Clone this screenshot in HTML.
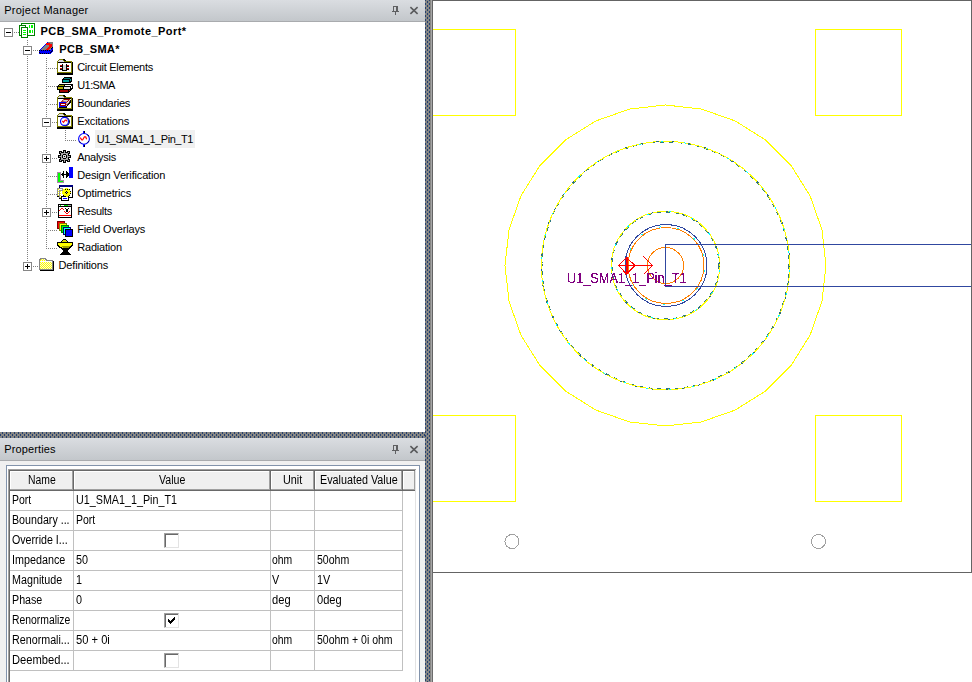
<!DOCTYPE html>
<html lang="en">
<head>
<meta charset="utf-8">
<title>Project Manager</title>
<style>
html,body{margin:0;padding:0;background:#fff;overflow:hidden}
body{width:972px;height:682px;position:relative;font-family:"Liberation Sans",sans-serif;color:#000}
.t{position:absolute;white-space:pre;transform-origin:0 0;display:block}
.abs{position:absolute}
.hdr{position:absolute;left:0;width:425px;background:linear-gradient(#dadde1,#c3c7cb);}
.dotv{position:absolute;width:1px;background-image:linear-gradient(#808080 50%,transparent 50%);background-size:1px 2px}
.doth{position:absolute;height:1px;background-image:linear-gradient(90deg,#808080 50%,transparent 50%);background-size:2px 1px}
.box{position:absolute;width:7px;height:7px;border:1px solid #868686;background:#fff}
.box i{position:absolute;left:1px;top:3px;width:5px;height:1px;background:#000}
.box b{position:absolute;left:3px;top:1px;width:1px;height:5px;background:#000}
.cb{position:absolute;width:13px;height:13px;background:#fff;border-top:1px solid #a0a0a0;border-left:1px solid #a0a0a0;border-right:1px solid #e3e3e3;border-bottom:1px solid #e3e3e3;box-shadow:inset 1px 1px 0 #696969}
.gl{position:absolute;background:#c0c0c0}
.hc{position:absolute;top:471px;height:20px;background:#f0f0f0;box-shadow:inset 0 -1px 0 #696969,inset -1px 0 0 #696969,inset 0 -2px 0 #a0a0a0,inset -2px 0 0 #a0a0a0,inset 1px 1px 0 #fff}
</style>
</head>
<body>

<!-- left: project manager -->
<div class="hdr" style="top:0;height:22px;border-bottom:1px solid #a9abae;box-sizing:border-box"></div>
<div class="abs" style="left:0;top:22px;width:425px;height:410px;background:#fff"></div>
<!-- splitters -->
<svg class="abs" style="left:0;top:0" width="972" height="682" shape-rendering="crispEdges">
<defs>
<pattern id="pv" x="425" y="3" width="4" height="4" patternUnits="userSpaceOnUse"><rect width="4" height="4" fill="#868684"/><rect x="0" y="0" width="1" height="2" fill="#24406f"/><rect x="2" y="2" width="1" height="2" fill="#24406f"/></pattern>
<pattern id="ph" x="0" y="432" width="4" height="4" patternUnits="userSpaceOnUse"><rect width="4" height="4" fill="#868684"/><rect x="2" y="0" width="1" height="2" fill="#24406f"/><rect x="0" y="2" width="1" height="2" fill="#24406f"/></pattern>
</defs>
<rect x="0" y="432" width="425" height="6" fill="url(#ph)"/>
<rect x="425" y="0" width="6" height="682" fill="url(#pv)"/>
<rect x="431" y="0" width="1" height="682" fill="#a6a6a6"/>
</svg>
<!-- properties -->
<div class="hdr" style="top:438px;height:23px;border-bottom:1px solid #a9abae;box-sizing:border-box"></div>
<div class="abs" style="left:0;top:461px;width:425px;height:221px;background:#f0f0f0"></div>
<div class="abs" style="left:6px;top:465px;width:414px;height:230px;border:1px solid #8293ab;background:#fff;box-sizing:border-box"></div>

<!-- tree connector lines -->
<div class="doth" style="left:14px;top:32px;width:5px"></div>
<div class="dotv" style="left:27px;top:40px;height:7px"></div>
<div class="dotv" style="left:27px;top:56px;height:206px"></div>
<div class="doth" style="left:33px;top:50px;width:6px"></div>
<div class="dotv" style="left:46px;top:58px;height:191px"></div>
<div class="doth" style="left:48px;top:68px;width:9px"></div>
<div class="doth" style="left:48px;top:86px;width:9px"></div>
<div class="doth" style="left:48px;top:104px;width:9px"></div>
<div class="doth" style="left:52px;top:122px;width:5px"></div>
<div class="dotv" style="left:65px;top:130px;height:10px"></div>
<div class="doth" style="left:65px;top:140px;width:11px"></div>
<div class="doth" style="left:52px;top:158px;width:5px"></div>
<div class="doth" style="left:48px;top:176px;width:9px"></div>
<div class="doth" style="left:48px;top:194px;width:9px"></div>
<div class="doth" style="left:52px;top:212px;width:5px"></div>
<div class="doth" style="left:48px;top:230px;width:9px"></div>
<div class="doth" style="left:48px;top:248px;width:9px"></div>
<div class="doth" style="left:33px;top:266px;width:6px"></div>
<!-- expand boxes -->
<div class="box" style="left:4px;top:28px"><i></i></div>
<div class="box" style="left:23px;top:46px"><i></i></div>
<div class="box" style="left:42px;top:118px"><i></i></div>
<div class="box" style="left:42px;top:154px"><i></i><b></b></div>
<div class="box" style="left:42px;top:208px"><i></i><b></b></div>
<div class="box" style="left:23px;top:262px"><i></i><b></b></div>
<!-- selection -->
<div class="abs" style="left:95px;top:130px;width:100px;height:18px;background:#f0f0f0"></div>

<!-- icons -->
<svg class="abs" style="left:0;top:0" width="425" height="432" shape-rendering="crispEdges">
<!-- project icon @ (19,23) -->
<g transform="translate(19 23)" fill="#fff" stroke="#008000">
<rect x="2.5" y="0.5" width="13" height="12"/>
<rect x="0.5" y="2.5" width="6" height="10"/>
<rect x="2.5" y="4.5" width="6" height="10"/>
<g fill="#00ff00" stroke="none">
<rect x="4" y="7" width="3" height="1"/><rect x="4" y="9" width="3" height="1"/><rect x="4" y="11" width="3" height="1"/>
<rect x="10" y="2" width="1" height="3"/><rect x="12" y="2" width="2" height="3"/><rect x="10" y="7" width="2" height="3"/><rect x="13" y="7" width="1" height="3"/>
</g>
</g>
<!-- design icon @ (39,42) -->
<g transform="translate(39 42)">
<polygon points="0,8 8,0 13,0 14,1 14,5 11,8" fill="#808080"/>
<g fill="#ff0000"><rect x="7" y="1" width="4" height="1"/><rect x="6" y="2" width="7" height="1"/><rect x="10" y="3" width="3" height="2"/><rect x="9" y="5" width="3" height="1"/><rect x="8" y="6" width="3" height="1"/><rect x="7" y="7" width="3" height="1"/></g>
<rect x="0" y="8" width="11" height="4" fill="#0000ff"/>
<polygon points="11,8 14,5 14,9 11,12" fill="#0000ff"/>
<g fill="#0000ff"><rect x="1" y="7" width="1" height="1"/><rect x="2" y="6" width="1" height="1"/><rect x="3" y="5" width="1" height="1"/><rect x="4" y="4" width="1" height="1"/><rect x="5" y="3" width="1" height="1"/><rect x="6" y="2" width="1" height="1"/><rect x="8" y="0" width="1" height="1"/></g>
<g fill="#000"><rect x="0" y="8" width="1" height="1"/><rect x="2" y="8" width="1" height="1"/><rect x="4" y="8" width="1" height="1"/><rect x="6" y="8" width="1" height="1"/><rect x="8" y="8" width="1" height="1"/><rect x="10" y="8" width="1" height="1"/>
<rect x="0" y="10" width="1" height="1"/><rect x="1" y="11" width="1" height="1"/><rect x="3" y="11" width="1" height="1"/><rect x="5" y="11" width="1" height="1"/><rect x="7" y="11" width="1" height="1"/><rect x="9" y="11" width="1" height="1"/>
<rect x="11" y="10" width="1" height="1"/><rect x="12" y="9" width="1" height="1"/><rect x="13" y="8" width="1" height="1"/><rect x="12" y="6" width="1" height="1"/><rect x="13" y="5" width="1" height="1"/></g>
</g>
<!-- circuit elements @ (57,59) -->
<g transform="translate(57 59)">
<g>
<rect x="0" y="3" width="16" height="13" fill="#000"/>
<rect x="0" y="2" width="15" height="12" fill="#808000"/>
<polygon points="0,2.5 2,0 6,0 8,2.5" fill="#808000"/>
<polygon points="6,0 7,0 9,2 7.5,2" fill="#000"/>
<polygon points="1,3 2.5,1 6,1 7,3" fill="#d8d8e4"/>
<rect x="1" y="3" width="13" height="1" fill="#000"/>
<rect x="1" y="4" width="13" height="9" fill="#fff"/>
</g>
<rect x="5" y="5" width="5" height="7" fill="#000"/><rect x="6" y="6" width="3" height="5" fill="#d4d4d4"/><rect x="6" y="5" width="3" height="1" fill="#fff"/>
<rect x="3" y="6" width="2" height="1" fill="#c00000"/><rect x="3" y="7" width="2" height="1" fill="#000"/>
<rect x="3" y="9" width="2" height="1" fill="#c00000"/><rect x="3" y="10" width="2" height="1" fill="#000"/>
<rect x="10" y="6" width="2" height="1" fill="#c00000"/><rect x="10" y="7" width="2" height="1" fill="#000"/>
<rect x="10" y="9" width="2" height="1" fill="#c00000"/><rect x="10" y="10" width="2" height="1" fill="#000"/>
</g>
<!-- U1:SMA @ (57,77) -->
<g transform="translate(57 77)">
<polygon points="5,2 7,0 15,0 15,4 13,6 5,6" fill="#000"/>
<rect x="7" y="1" width="6" height="1" fill="#008080"/><rect x="6" y="3" width="6" height="2" fill="#00a0a0"/><rect x="13" y="2" width="1" height="2" fill="#00a0a0"/>
<polygon points="0,9 2,7 16,7 16,11 14,13 0,13" fill="#000"/>
<rect x="2" y="8" width="5" height="1" fill="#a0a000"/><rect x="8" y="8" width="6" height="1" fill="#fff"/>
<rect x="1" y="10" width="5" height="2" fill="#b0b000"/><rect x="7" y="10" width="6" height="2" fill="#e8e8e8"/><rect x="14" y="9" width="1" height="2" fill="#fff"/>
<polygon points="2,13 14,13 12,16 2,16" fill="#000"/>
<rect x="3" y="13" width="8" height="2" fill="#a00000"/><rect x="12" y="13" width="1" height="1" fill="#c00000"/>
</g>
<!-- boundaries @ (57,95) -->
<g transform="translate(57 95)">
<g>
<rect x="0" y="3" width="16" height="13" fill="#000"/>
<rect x="0" y="2" width="15" height="12" fill="#808000"/>
<polygon points="0,2.5 2,0 6,0 8,2.5" fill="#808000"/>
<polygon points="6,0 7,0 9,2 7.5,2" fill="#000"/>
<polygon points="1,3 2.5,1 6,1 7,3" fill="#d8d8e4"/>
<rect x="1" y="3" width="13" height="1" fill="#000"/>
<rect x="1" y="4" width="13" height="9" fill="#fff"/>
</g>
<polygon points="9,12 13,5 14,5 14,7 10,12" fill="#000"/>
<rect x="2" y="12" width="8" height="1" fill="#000"/>
<g shape-rendering="auto"><polygon points="9.5,7.5 12.5,4.5 12.5,6.5 9.5,10.5" fill="#e4e4dc" stroke="#a00000" stroke-width="0.8" stroke-dasharray="1 1"/>
<polygon points="4.5,6.8 6.7,4.5 12.5,4.5 9.8,7.2" fill="#d8d8d0" stroke="#a00000" stroke-width="1"/></g>
<rect x="2" y="7" width="7" height="5" fill="#0000ff"/>
<rect x="3.5" y="8.5" width="5" height="2" fill="#fff" stroke="#a00000"/>
</g>
<!-- excitations @ (57,113) -->
<g transform="translate(57 113)">
<g>
<rect x="0" y="3" width="16" height="13" fill="#000"/>
<rect x="0" y="2" width="15" height="12" fill="#808000"/>
<polygon points="0,2.5 2,0 6,0 8,2.5" fill="#808000"/>
<polygon points="6,0 7,0 9,2 7.5,2" fill="#000"/>
<polygon points="1,3 2.5,1 6,1 7,3" fill="#d8d8e4"/>
<rect x="1" y="3" width="13" height="1" fill="#000"/>
<rect x="1" y="4" width="13" height="9" fill="#fff"/>
</g>
<g shape-rendering="auto"><circle cx="8.4" cy="8.6" r="4" fill="none" stroke="#000" stroke-width="1.1"/>
<circle cx="7.5" cy="8.4" r="4" fill="#fff" stroke="#0000ff" stroke-width="1.15"/>
<path d="M5.3 7.8l1.2 1.5 1.7-2.2 1.3.1.3 1.3" stroke="#ff0000" stroke-width="1.1" fill="none"/></g>
</g>
<!-- excitation item @ (76,131) -->
<g transform="translate(76 131)" shape-rendering="auto">
<rect x="7" y="0" width="2" height="3" fill="#0000ff" shape-rendering="crispEdges"/><rect x="7" y="13" width="2" height="3" fill="#0000ff" shape-rendering="crispEdges"/>
<rect x="8" y="0" width="1" height="2" fill="#000" shape-rendering="crispEdges"/><rect x="8" y="14" width="1" height="2" fill="#000" shape-rendering="crispEdges"/>
<circle cx="8" cy="7.9" r="5.4" fill="#fff" stroke="#0000ff" stroke-width="1.1"/>
<path d="M11.6 3.6l1.3 1.6M12.6 10.3l-1 1.3M3.3 10.6l1.2 1.3" stroke="#000" stroke-width="0.9" fill="none"/>
<path d="M4.3 6.6l1.5 2.4h.8l1.8-3.2h1.3l.9 2.4" stroke="#ff0000" stroke-width="1.2" fill="none"/>
</g>
<!-- analysis gear @ (58,150) -->
<g transform="translate(58 150)" fill="#000">
<rect x="5" y="0" width="3" height="13"/><rect x="0" y="5" width="13" height="3"/>
<rect x="1" y="1" width="3" height="3"/><rect x="9" y="1" width="3" height="3"/><rect x="1" y="9" width="3" height="3"/><rect x="9" y="9" width="3" height="3"/>
<rect x="2" y="2" width="9" height="9"/>
<rect x="3" y="3" width="7" height="7" fill="#a8a8a8"/>
<rect x="6" y="1" width="1" height="2" fill="#a8a8a8"/><rect x="6" y="10" width="1" height="2" fill="#a8a8a8"/><rect x="1" y="6" width="2" height="1" fill="#a8a8a8"/><rect x="10" y="6" width="2" height="1" fill="#a8a8a8"/>
<rect x="2" y="2" width="1" height="1" fill="#b0b0b0"/><rect x="10" y="2" width="1" height="1" fill="#b0b0b0"/><rect x="2" y="10" width="1" height="1" fill="#b0b0b0"/><rect x="10" y="10" width="1" height="1" fill="#b0b0b0"/>
<rect x="4" y="4" width="5" height="5"/><rect x="5" y="5" width="3" height="3" fill="#d8d8d8"/><rect x="6" y="6" width="1" height="1"/>
<rect x="4" y="4" width="1" height="1" fill="#a8a8a8"/><rect x="8" y="4" width="1" height="1" fill="#a8a8a8"/><rect x="4" y="8" width="1" height="1" fill="#a8a8a8"/><rect x="8" y="8" width="1" height="1" fill="#a8a8a8"/>
</g>
<!-- design verification @ (57,167) -->
<g transform="translate(57 167)">
<rect x="12" y="0" width="4" height="11" fill="#0000ff"/>
<path d="M0 5h4v8h3v3h-7z" fill="#a888a8"/>
<path d="M1 6h2v8h3v1h-5z" fill="#00ff00"/>
<g fill="#000"><rect x="4" y="7" width="8" height="1"/><rect x="5" y="6" width="1" height="3"/><rect x="6" y="4" width="1" height="7"/><rect x="9" y="4" width="1" height="7"/><rect x="10" y="5" width="1" height="5"/><rect x="11" y="6" width="1" height="3"/></g>
</g>
<!-- optimetrics @ (57,185) -->
<g transform="translate(57 185)">
<rect x="2.5" y="1.5" width="13" height="11" fill="#fff" stroke="#000"/>
<rect x="2" y="0" width="14" height="2" fill="#000080"/>
<rect x="0.5" y="3.5" width="5" height="8" fill="#fff" stroke="#909090"/><rect x="0" y="11" width="3" height="1" fill="#000"/>
<rect x="2.5" y="5.5" width="4" height="8" fill="#fff" stroke="#909090"/><rect x="2" y="13" width="3" height="1" fill="#000"/>
<g fill="#ffff00"><rect x="1" y="4" width="1" height="1"/><rect x="1" y="6" width="1" height="1"/><rect x="1" y="8" width="1" height="1"/><rect x="1" y="10" width="1" height="1"/>
<rect x="3" y="6" width="1" height="1"/><rect x="3" y="8" width="1" height="1"/><rect x="3" y="10" width="1" height="1"/><rect x="3" y="12" width="1" height="1"/></g>
<rect x="4.5" y="11.5" width="7" height="4" fill="#fff" stroke="#000"/><rect x="6" y="13" width="4" height="1" fill="#0000ff"/>
<g fill="#ffff00"><rect x="8" y="3" width="3" height="9"/><rect x="6" y="4" width="7" height="7"/><rect x="5" y="6" width="9" height="3"/></g>
<g fill="#000"><rect x="8" y="4" width="1" height="1"/><rect x="10" y="4" width="1" height="1"/><rect x="12" y="4" width="1" height="1"/><rect x="13" y="6" width="1" height="1"/><rect x="13" y="8" width="1" height="1"/><rect x="12" y="10" width="1" height="1"/><rect x="6" y="10" width="1" height="1"/><rect x="8" y="11" width="1" height="1"/><rect x="11" y="11" width="1" height="1"/>
<rect x="9" y="6" width="1" height="3"/><rect x="8" y="7" width="3" height="1"/></g>
<rect x="9" y="7" width="1" height="1" fill="#b0b0b0"/>
</g>
<!-- results @ (58,204) -->
<g transform="translate(58 204)">
<rect x="0.5" y="0.5" width="13" height="13" fill="#fff" stroke="#000"/>
<rect x="1" y="2" width="12" height="1" fill="#000"/>
<rect x="2" y="1" width="1" height="1" fill="#00e000"/><rect x="6" y="1" width="4" height="1" fill="#00e000"/><rect x="10" y="1" width="3" height="1" fill="#a0a0a0"/>
<rect x="1" y="11" width="12" height="1" fill="#ff0000"/>
<g fill="#ff0000"><rect x="1" y="6" width="1" height="1"/><rect x="2" y="5" width="1" height="1"/><rect x="3" y="4" width="1" height="1"/><rect x="4" y="4" width="1" height="1"/><rect x="5" y="5" width="1" height="1"/><rect x="6" y="7" width="1" height="1"/><rect x="7" y="8" width="1" height="1"/><rect x="8" y="9" width="1" height="1"/><rect x="9" y="9" width="1" height="1"/><rect x="10" y="8" width="1" height="1"/><rect x="11" y="7" width="1" height="1"/></g>
<g fill="#000"><rect x="7" y="4" width="1" height="1"/><rect x="10" y="4" width="1" height="1"/><rect x="8" y="5" width="2" height="3"/></g>
</g>
<!-- field overlays @ (57,221) -->
<g transform="translate(57 221)">
<rect x="0.5" y="0.5" width="7" height="7" fill="#ff0000" stroke="#800000"/>
<rect x="2.5" y="2.5" width="7" height="7" fill="#ffff00" stroke="#808000"/>
<rect x="4.5" y="4.5" width="7" height="7" fill="#00ff00" stroke="#008000"/>
<rect x="6.5" y="6.5" width="7" height="7" fill="#00ffff" stroke="#000080"/>
<rect x="8.5" y="8.5" width="7" height="7" fill="#0000ff" stroke="#000"/>
</g>
<!-- radiation @ (57,239) -->
<g transform="translate(57 239)">
<path d="M6 0h3l2 3h5v4l-5 4v2l3 3h-11.7l3.7-3v-2l-6-4v-4h4z" fill="#000"/>
<path d="M1 4h14v2l-4 3h-5l-5-3z" fill="#ffff00"/>
<path d="M4 7h9l-2 2h-5z" fill="#a0a000"/>
<path d="M5 3l1.5-2h2l1.5 2z" fill="#d8d800"/>
</g>
<!-- definitions folder @ (39,258) -->
<pattern id="dith" x="0" y="0" width="2" height="2" patternUnits="userSpaceOnUse"><rect width="2" height="2" fill="#ffff00"/><rect x="0" y="0" width="1" height="1" fill="#f8f8e0"/><rect x="1" y="1" width="1" height="1" fill="#f8f8e0"/></pattern>
<g transform="translate(39 258)">
<rect x="1" y="3" width="14" height="10" fill="#000"/>
<path d="M0 2l1-2h6l1 2h6v10h-14z" fill="#868686"/>
<path d="M1 3l1-2h4l1 2h6v8h-12z" fill="url(#dith)"/>
<rect x="1" y="3" width="12" height="1" fill="#fff"/>
</g>
</svg>

<!-- table header cells -->
<div class="abs" style="left:8px;top:469px;width:408px;height:1px;background:#a0a0a0"></div>
<div class="abs" style="left:415px;top:470px;width:1px;height:212px;background:#e3e3e3"></div>
<div class="abs" style="left:8px;top:469px;width:1px;height:213px;background:#a0a0a0"></div>
<div class="abs" style="left:9px;top:470px;width:406px;height:1px;background:#696969"></div>
<div class="abs" style="left:9px;top:470px;width:1px;height:212px;background:#696969"></div>
<div class="hc" style="left:10px;width:64px"></div>
<div class="hc" style="left:74px;width:197px"></div>
<div class="hc" style="left:271px;width:44px"></div>
<div class="hc" style="left:315px;width:88px"></div>
<div class="hc" style="left:403px;width:12px;box-shadow:inset 0 -1px 0 #696969,inset 0 -2px 0 #a0a0a0,inset -1px 0 0 #a0a0a0,inset 1px 1px 0 #fff"></div>
<!-- grid lines -->
<div class="gl" style="left:10px;top:510px;width:393px;height:1px"></div>
<div class="gl" style="left:10px;top:530px;width:393px;height:1px"></div>
<div class="gl" style="left:10px;top:550px;width:393px;height:1px"></div>
<div class="gl" style="left:10px;top:570px;width:393px;height:1px"></div>
<div class="gl" style="left:10px;top:590px;width:393px;height:1px"></div>
<div class="gl" style="left:10px;top:610px;width:393px;height:1px"></div>
<div class="gl" style="left:10px;top:630px;width:393px;height:1px"></div>
<div class="gl" style="left:10px;top:650px;width:393px;height:1px"></div>
<div class="gl" style="left:10px;top:670px;width:393px;height:1px"></div>
<div class="gl" style="left:73px;top:491px;width:1px;height:180px"></div>
<div class="gl" style="left:270px;top:491px;width:1px;height:180px"></div>
<div class="gl" style="left:314px;top:491px;width:1px;height:180px"></div>
<div class="gl" style="left:402px;top:491px;width:1px;height:180px"></div>
<!-- checkboxes -->
<div class="cb" style="left:164px;top:533px"></div>
<div class="cb" style="left:164px;top:613px"></div>
<svg class="abs" style="left:164px;top:613px" width="15" height="15" shape-rendering="crispEdges"><path d="M4.5 6v3M5.5 7v3M6.5 8v3M7.5 7v3M8.5 6v3M9.5 5v3M10.5 4v3" stroke="#000" stroke-width="1" fill="none"/></svg>
<div class="cb" style="left:164px;top:653px"></div>

<!-- header pin / close icons -->
<svg class="abs" style="left:0;top:0" width="425" height="470">
<g>
<g shape-rendering="crispEdges" fill="#5f6062"><rect x="393" y="6" width="5" height="1"/><rect x="393" y="6" width="1" height="5"/><rect x="396" y="6" width="2" height="5"/><rect x="392" y="11" width="7" height="1"/><rect x="395" y="12" width="1" height="3"/></g>
<path d="M410.4 7.2L417.6 13.8M417.6 7.2L410.4 13.8" stroke="#595a5c" stroke-width="1.6" fill="none"/>
</g>
<g transform="translate(0 439)">
<g shape-rendering="crispEdges" fill="#5f6062"><rect x="393" y="6" width="5" height="1"/><rect x="393" y="6" width="1" height="5"/><rect x="396" y="6" width="2" height="5"/><rect x="392" y="11" width="7" height="1"/><rect x="395" y="12" width="1" height="3"/></g>
<path d="M410.4 7.2L417.6 13.8M417.6 7.2L410.4 13.8" stroke="#595a5c" stroke-width="1.6" fill="none"/>
</g>
</svg>

<!-- canvas -->
<svg class="abs" style="left:432px;top:0" width="540" height="682" viewBox="432 0 540 682" shape-rendering="crispEdges" fill="none" stroke-width="1">
<defs><filter id="thr" x="-5%" y="-20%" width="110%" height="140%"><feComponentTransfer><feFuncA type="discrete" tableValues="0 0 1 1 1"/></feComponentTransfer></filter></defs>
<rect x="432" y="0" width="540" height="682" fill="#fff" stroke="none"/>
<g stroke="#2f7a80" stroke-dasharray="4 5">
<circle cx="665.5" cy="265.5" r="123.5"/>
<circle cx="665.5" cy="265.5" r="53.5"/>
</g>
<g stroke="#ffff00">
<rect x="429.5" y="29.5" width="86" height="86"/>
<rect x="815.5" y="29.5" width="86" height="86"/>
<rect x="429.5" y="415.5" width="86" height="86"/>
<rect x="815.5" y="415.5" width="86" height="86"/>
<polygon points="826.0,265.5 822.0,301.2 810.1,335.1 791.0,365.6 765.6,391.0 735.1,410.1 701.2,422.0 665.5,426.0 629.8,422.0 595.9,410.1 565.4,391.0 540.0,365.6 520.9,335.1 509.0,301.2 505.0,265.5 509.0,229.8 520.9,195.9 540.0,165.4 565.4,140.0 595.9,120.9 629.8,109.0 665.5,105.0 701.2,109.0 735.1,120.9 765.6,140.0 791.0,165.4 810.1,195.9 822.0,229.8"/>
<circle cx="665.5" cy="265.5" r="124.2"/>
<circle cx="665.5" cy="265.5" r="54.2"/>
</g>
<g stroke="#2a6a7a" stroke-dasharray="2 14">
<circle cx="665.5" cy="265.5" r="124.2"/>
<circle cx="665.5" cy="265.5" r="54.2"/>
</g>
<g stroke="#00ffff" stroke-dasharray="2 21" stroke-dashoffset="-5">
<circle cx="665.5" cy="265.5" r="124"/>
<circle cx="665.5" cy="265.5" r="54"/>
<circle cx="666" cy="265.5" r="39" stroke-dasharray="2 17"/>
</g>
<circle cx="666" cy="265.5" r="41" stroke="#3048a0"/>
<circle cx="666" cy="265.5" r="38" stroke="#ff8000"/>
<circle cx="665.5" cy="265.5" r="18" stroke="#ff8000"/>
<path d="M971.5 244.5H665.5V286.5H971.5" stroke="#3048a0"/>
<circle cx="512" cy="541.5" r="7" stroke="#a0a0a0"/>
<circle cx="818.5" cy="541.5" r="7" stroke="#a0a0a0"/>
<g stroke="#ff0000">
<path d="M618.5 265.5H652.5M652.5 265.5L643.5 256.5M652.5 265.5L643.5 274.5M618.5 265.5L626.5 257.5L635 265.5L626.5 274Z"/>
<rect x="626" y="257" width="2" height="17" fill="#ff0000" stroke="none"/>
</g>
<rect x="432.5" y="0.5" width="539" height="572" stroke="#646464"/>
<path d="M432.5 572V682" stroke="#6c6c6c"/>
</svg>

<span class="t" style="left:4.3px;top:5.39px;font-size:11px;line-height:11px;letter-spacing:0.232px;">Project Manager</span>
<span class="t" style="left:4.3px;top:443.69px;font-size:11px;line-height:11px;letter-spacing:0.116px;">Properties</span>
<span class="t" style="left:40.5px;top:25.69px;font-size:11px;line-height:11px;font-weight:bold;letter-spacing:0.432px;">PCB_SMA_Promote_Port*</span>
<span class="t" style="left:59.3px;top:43.69px;font-size:11px;line-height:11px;font-weight:bold;letter-spacing:0.303px;">PCB_SMA*</span>
<span class="t" style="left:77.2px;top:61.69px;font-size:11px;line-height:11px;letter-spacing:-0.267px;">Circuit Elements</span>
<span class="t" style="left:77.2px;top:79.69px;font-size:11px;line-height:11px;letter-spacing:-0.561px;">U1:SMA</span>
<span class="t" style="left:77.2px;top:97.69px;font-size:11px;line-height:11px;letter-spacing:-0.286px;">Boundaries</span>
<span class="t" style="left:77.2px;top:115.69px;font-size:11px;line-height:11px;letter-spacing:-0.109px;">Excitations</span>
<span class="t" style="left:96.7px;top:133.69px;font-size:11px;line-height:11px;letter-spacing:-0.440px;">U1_SMA1_1_Pin_T1</span>
<span class="t" style="left:77.2px;top:151.69px;font-size:11px;line-height:11px;letter-spacing:-0.284px;">Analysis</span>
<span class="t" style="left:77.2px;top:169.69px;font-size:11px;line-height:11px;letter-spacing:-0.164px;">Design Verification</span>
<span class="t" style="left:77.2px;top:187.69px;font-size:11px;line-height:11px;letter-spacing:-0.166px;">Optimetrics</span>
<span class="t" style="left:77.2px;top:205.69px;font-size:11px;line-height:11px;letter-spacing:-0.270px;">Results</span>
<span class="t" style="left:77.2px;top:223.69px;font-size:11px;line-height:11px;letter-spacing:-0.164px;">Field Overlays</span>
<span class="t" style="left:77.2px;top:241.69px;font-size:11px;line-height:11px;letter-spacing:-0.187px;">Radiation</span>
<span class="t" style="left:58.6px;top:259.69px;font-size:11px;line-height:11px;letter-spacing:-0.169px;">Definitions</span>
<span class="t" style="left:28.0px;top:473.84px;font-size:12px;line-height:12px;transform:scaleX(0.8652);">Name</span>
<span class="t" style="left:158.5px;top:473.84px;font-size:12px;line-height:12px;transform:scaleX(0.8822);">Value</span>
<span class="t" style="left:282.8px;top:473.84px;font-size:12px;line-height:12px;transform:scaleX(0.9042);">Unit</span>
<span class="t" style="left:319.5px;top:473.84px;font-size:12px;line-height:12px;transform:scaleX(0.8981);">Evaluated Value</span>
<span class="t" style="left:11.5px;top:493.84px;font-size:12px;line-height:12px;transform:scaleX(0.8721);">Port</span>
<span class="t" style="left:11.5px;top:513.84px;font-size:12px;line-height:12px;transform:scaleX(0.8900);">Boundary ...</span>
<span class="t" style="left:11.5px;top:533.84px;font-size:12px;line-height:12px;transform:scaleX(0.8885);">Override I...</span>
<span class="t" style="left:11.5px;top:553.84px;font-size:12px;line-height:12px;transform:scaleX(0.8977);">Impedance</span>
<span class="t" style="left:11.5px;top:573.84px;font-size:12px;line-height:12px;transform:scaleX(0.8957);">Magnitude</span>
<span class="t" style="left:11.5px;top:593.84px;font-size:12px;line-height:12px;transform:scaleX(0.8904);">Phase</span>
<span class="t" style="left:11.5px;top:613.84px;font-size:12px;line-height:12px;transform:scaleX(0.8650);">Renormalize</span>
<span class="t" style="left:11.5px;top:633.84px;font-size:12px;line-height:12px;transform:scaleX(0.8935);">Renormali...</span>
<span class="t" style="left:11.5px;top:653.84px;font-size:12px;line-height:12px;transform:scaleX(0.9300);">Deembed...</span>
<span class="t" style="left:75.7px;top:493.84px;font-size:12px;line-height:12px;transform:scaleX(0.8959);">U1_SMA1_1_Pin_T1</span>
<span class="t" style="left:75.7px;top:513.84px;font-size:12px;line-height:12px;transform:scaleX(0.8721);">Port</span>
<span class="t" style="left:75.7px;top:553.84px;font-size:12px;line-height:12px;transform:scaleX(0.9000);">50</span>
<span class="t" style="left:75.7px;top:573.84px;font-size:12px;line-height:12px;transform:scaleX(0.9000);">1</span>
<span class="t" style="left:75.7px;top:593.84px;font-size:12px;line-height:12px;transform:scaleX(0.9000);">0</span>
<span class="t" style="left:75.7px;top:633.84px;font-size:12px;line-height:12px;transform:scaleX(0.9300);">50 + 0i</span>
<span class="t" style="left:272.2px;top:553.84px;font-size:12px;line-height:12px;transform:scaleX(0.8650);">ohm</span>
<span class="t" style="left:272.2px;top:573.84px;font-size:12px;line-height:12px;transform:scaleX(0.9000);">V</span>
<span class="t" style="left:272.2px;top:593.84px;font-size:12px;line-height:12px;transform:scaleX(0.9300);">deg</span>
<span class="t" style="left:272.2px;top:633.84px;font-size:12px;line-height:12px;transform:scaleX(0.8650);">ohm</span>
<span class="t" style="left:316.6px;top:553.84px;font-size:12px;line-height:12px;transform:scaleX(0.8800);">50ohm</span>
<span class="t" style="left:316.6px;top:573.84px;font-size:12px;line-height:12px;transform:scaleX(0.9000);">1V</span>
<span class="t" style="left:316.6px;top:593.84px;font-size:12px;line-height:12px;transform:scaleX(0.9250);">0deg</span>
<span class="t" style="left:316.6px;top:633.84px;font-size:12px;line-height:12px;transform:scaleX(0.8751);">50ohm + 0i ohm</span>
<span class="t" style="left:566.6px;top:271.15px;font-size:14px;line-height:14px;color:#800080;transform:scaleX(0.9085);filter:url(#thr);">U1_SMA1_1_Pin_T1</span>

</body>
</html>
